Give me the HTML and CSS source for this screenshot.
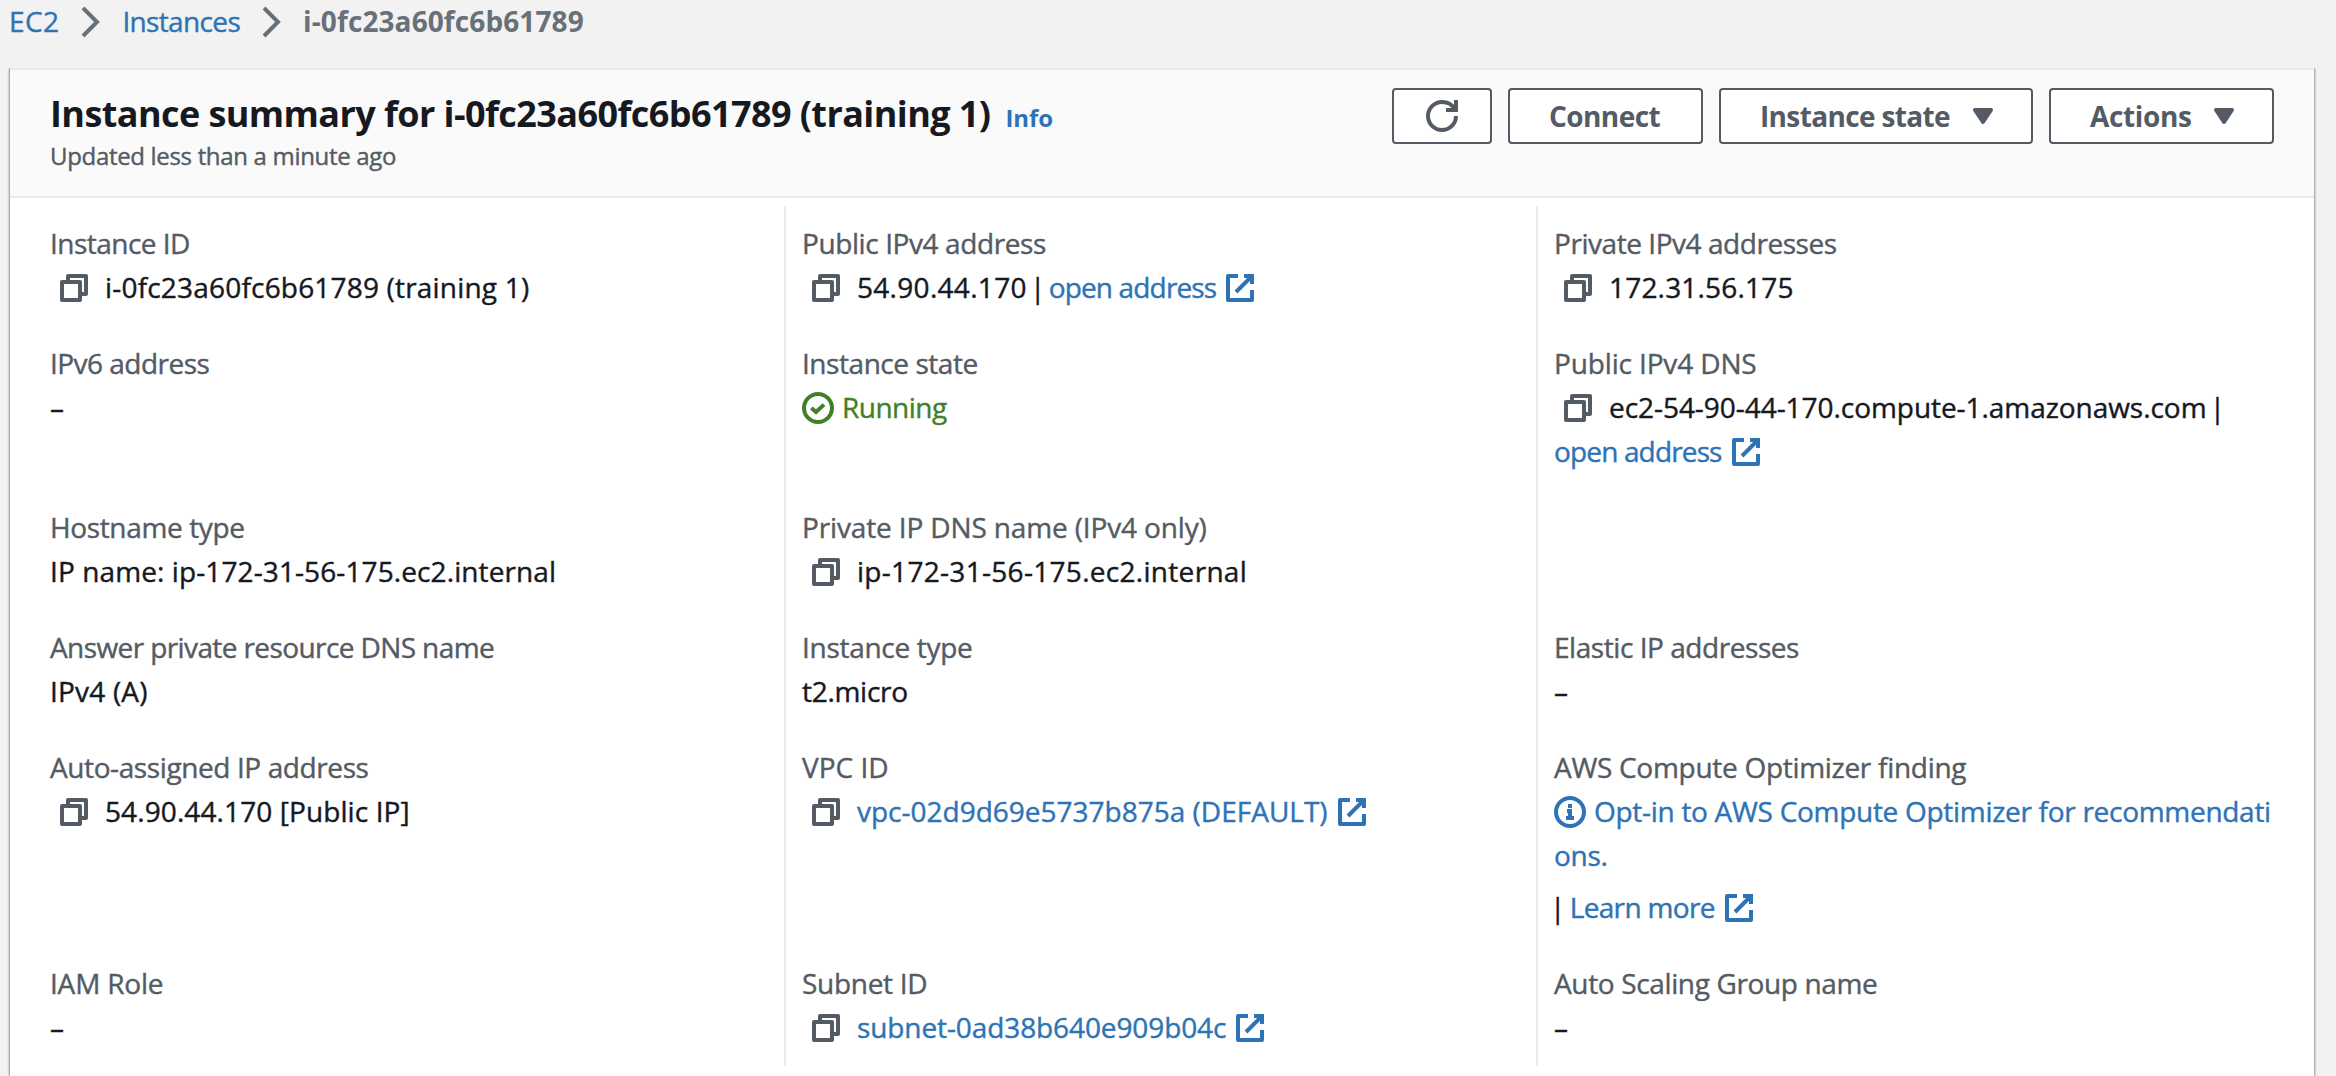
FILE: index.html
```
<!DOCTYPE html>
<html lang="en">
<head>
<meta charset="utf-8">
<title>Instance details | EC2</title>
<link rel="stylesheet" href="styles.css">
</head>
<body>
<svg class="sprite" aria-hidden="true">
  <symbol id="copy" viewBox="0 0 16 16"><path d="M2 5h9v9H2z"/><path d="M5 5V2h9v9h-3"/></symbol>
  <symbol id="external" viewBox="0 0 16 16"><path class="miter" d="M10 2h4v4M6 10l8-8"/><path d="M14 9v5H2V2h5"/></symbol>
  <symbol id="chevron" viewBox="0 0 16 16"><path class="miter" d="M4 1l7 7-7 7"/></symbol>
  <symbol id="refresh" viewBox="0 0 16 16"><path class="miter" d="M10 5h5V0"/><path class="miter" d="M15 8a7 7 0 1 1-7-7c3 0 5.300 1.500 6.400 3.700"/></symbol>
  <symbol id="caret" viewBox="0 0 16 16"><path class="solid" d="M4 5h8l-4 6z"/></symbol>
  <symbol id="success" viewBox="0 0 16 16"><circle cx="8" cy="8" r="7"/><path class="miter" d="M4.700 8l2.300 2 4-3.700"/></symbol>
  <symbol id="info" viewBox="0 0 16 16"><circle cx="8" cy="8" r="7"/><path class="miter" d="M6 11h4M8 11V7.500H6.500M8 6V4"/></symbol>
</svg>

<nav class="breadcrumbs" aria-label="Breadcrumbs">
  <a href="#" class="ls-w4">EC2</a>
  <svg class="icon"><use href="#chevron"/></svg>
  <a href="#" class="ls-t65">Instances</a>
  <svg class="icon"><use href="#chevron"/></svg>
  <span class="current">i-0fc23a60fc6b61789</span>
</nav>

<main class="card">
  <header class="card-header">
    <div class="heading">
      <h1><span class="title">Instance summary for i-0fc23a60fc6b61789 (training 1)</span><a href="#" class="info">Info</a></h1>
      <p class="updated">Updated less than a minute ago</p>
    </div>
    <div class="actions">
      <button class="btn btn-refresh" aria-label="Refresh"><svg class="icon"><use href="#refresh"/></svg></button>
      <button class="btn btn-connect"><span>Connect</span></button>
      <button class="btn btn-state"><span>Instance state</span><svg class="icon"><use href="#caret"/></svg></button>
      <button class="btn btn-actions"><span>Actions</span><svg class="icon"><use href="#caret"/></svg></button>
    </div>
  </header>

  <div class="details">
    <div class="field">
      <div class="label ls-t5">Instance ID</div>
      <div><svg class="icon copy"><use href="#copy"/></svg><span class="ls-w2">i-0fc23a60fc6b61789 (training 1)</span></div>
    </div>
    <div class="field">
      <div class="label ls-t4">Public IPv4 address</div>
      <div><svg class="icon copy"><use href="#copy"/></svg><span class="ls-w3">54.90.44.170</span> <span class="bar">|</span> <a href="#" class="ls-t8">open address<svg class="icon ext"><use href="#external"/></svg></a></div>
    </div>
    <div class="field">
      <div class="label ls-t45">Private IPv4 addresses</div>
      <div><svg class="icon copy"><use href="#copy"/></svg><span class="ls-w2">172.31.56.175</span></div>
    </div>

    <div class="field">
      <div class="label ls-t5">IPv6 address</div>
      <div class="dash">–</div>
    </div>
    <div class="field">
      <div class="label ls-t45">Instance state</div>
      <div class="running ls-t5"><svg class="icon status"><use href="#success"/></svg>Running</div>
    </div>
    <div class="field">
      <div class="label ls-t15">Public IPv4 DNS</div>
      <div><svg class="icon copy"><use href="#copy"/></svg><span class="ls-t05">ec2-54-90-44-170.compute-1.amazonaws.com</span> <span class="bar">|</span> <a href="#" class="ls-t8">open address<svg class="icon ext"><use href="#external"/></svg></a></div>
    </div>

    <div class="field">
      <div class="label ls-t35">Hostname type</div>
      <div class="ls-w1">IP name: ip-172-31-56-175.ec2.internal</div>
    </div>
    <div class="field">
      <div class="label ls-t15">Private IP DNS name (IPv4 only)</div>
      <div><svg class="icon copy"><use href="#copy"/></svg><span class="ls-w3">ip-172-31-56-175.ec2.internal</span></div>
    </div>
    <div class="field"></div>

    <div class="field">
      <div class="label ls-t6">Answer private resource DNS name</div>
      <div class="ls-w2">IPv4 (A)</div>
    </div>
    <div class="field">
      <div class="label ls-t3">Instance type</div>
      <div class="ls-t3">t2.micro</div>
    </div>
    <div class="field">
      <div class="label ls-t45">Elastic IP addresses</div>
      <div class="dash">–</div>
    </div>

    <div class="field">
      <div class="label ls-t4">Auto-assigned IP address</div>
      <div><svg class="icon copy"><use href="#copy"/></svg><span class="ls-w1">54.90.44.170 [Public IP]</span></div>
    </div>
    <div class="field">
      <div class="label">VPC ID</div>
      <div><svg class="icon copy"><use href="#copy"/></svg><a href="#">vpc-02d9d69e5737b875a (DEFAULT)<svg class="icon ext"><use href="#external"/></svg></a></div>
    </div>
    <div class="field">
      <div class="label ls-t3">AWS Compute Optimizer finding</div>
      <div class="finding"><a href="#" class="ls-t3"><svg class="icon status"><use href="#info"/></svg>Opt-in to AWS Compute Optimizer for recommendations.</a></div>
      <div class="more"><span class="bar">|</span> <a href="#" class="ls-t65">Learn more<svg class="icon ext"><use href="#external"/></svg></a></div>
    </div>

    <div class="field">
      <div class="label ls-t2">IAM Role</div>
      <div class="dash">–</div>
    </div>
    <div class="field">
      <div class="label ls-t3">Subnet ID</div>
      <div><svg class="icon copy"><use href="#copy"/></svg><a href="#" class="ls-t1">subnet-0ad38b640e909b04c<svg class="icon ext"><use href="#external"/></svg></a></div>
    </div>
    <div class="field">
      <div class="label ls-t35">Auto Scaling Group name</div>
      <div class="dash">–</div>
    </div>
  </div>
</main>
</body>
</html>
```
FILE: styles.css
```
* { box-sizing: border-box; }

html, body { height: 100%; }

body {
  margin: 0;
  display: flex;
  flex-direction: column;
  background: #f2f2f2;
  color: #16191f;
  font: 400 28px/44px "Open Sans", "Noto Sans", sans-serif;
  -webkit-text-stroke: .4px currentColor;
}

a { color: #2e73b5; text-decoration: none; }
h1, p { margin: 0; }
h1, .current, .btn { -webkit-text-stroke: 0; }

/* Icons */
.sprite { display: none; }
.icon {
  flex: none;
  width: 32px;
  height: 32px;
  vertical-align: -6px;
  fill: none;
  stroke: currentColor;
  stroke-width: 2;
  stroke-linejoin: round;
  overflow: visible;
}
.miter { stroke-linejoin: miter; }
.solid { fill: currentColor; }
.copy { margin: 0 15px 0 8px; color: #545b64; }
.ext { margin-left: 8px; }
.status { margin-right: 8px; }

/* Breadcrumbs */
.breadcrumbs {
  flex: none;
  display: flex;
  align-items: flex-start;
  height: 68px;
  padding-left: 9px;
  line-height: 42px;
}
.breadcrumbs .icon { margin: 6px 15px 0 16px; color: #687078; }
.current { color: #687078; font-weight: 700; letter-spacing: .1px; }

/* Card */
.card {
  flex: 1;
  width: 2304px;
  margin-left: 10px;
  background: #fff;
  border-top: 2px solid #e9ebeb;
  box-shadow: 1px 0 2px rgba(0, 28, 36, .4), -1px 0 2px rgba(0, 28, 36, .4);
  clip-path: inset(0 -4px);
}
.card-header {
  display: flex;
  justify-content: space-between;
  align-items: flex-start;
  height: 128px;
  padding: 18px 40px 0;
  background: #fafafa;
  border-bottom: 2px solid #e9ebeb;
}
.heading { padding-top: 4px; }
h1 { display: flex; align-items: baseline; font-size: 36px; line-height: 44px; }
.title { letter-spacing: -.58px; }
.info { margin-left: 15px; font-size: 24px; letter-spacing: -.1px; }
.updated {
  color: #545b64;
  font-size: 24px;
  line-height: 32px;
  letter-spacing: -.32px;
}

/* Buttons */
.actions { display: flex; gap: 16px; }
.btn {
  display: flex;
  align-items: center;
  height: 56px;
  padding: 0;
  background: #fff;
  border: 2px solid #545b64;
  border-radius: 4px;
  color: #545b64;
  font: 700 28px/50px "Open Sans", "Noto Sans", sans-serif;
}
.btn span { padding-bottom: 1px; }
.btn-refresh { width: 100px; justify-content: center; }
.btn-connect { width: 195px; padding-left: 39px; letter-spacing: -.57px; }
.btn-state { width: 314px; padding-left: 39px; letter-spacing: -.65px; }
.btn-actions { width: 225px; padding-left: 39px; letter-spacing: -.36px; }
.btn span + .icon { margin-left: auto; margin-right: 32px; }

/* Detail fields */
.details {
  display: grid;
  grid-template-columns: 774px 752px 1fr;
  grid-template-rows: 135px 164px 120px 120px 216px 105px;
  padding: 8px 0;
}
.field { padding-left: 40px; }
.field:nth-child(-n+3) { padding-top: 15px; }
.field:not(:nth-child(3n+1)) { padding-left: 16px; border-left: 2px solid #e9ebeb; }
.field:nth-child(3n) { padding-right: 40px; }
.field a { white-space: nowrap; }
.label { color: #545b64; }
.bar { margin: 0 -4px; }
.running { color: #437f28; }
.finding { word-break: break-all; }
.field .finding a { white-space: normal; }
.more { margin-top: 8px; }
.more .bar { margin-right: -3px; }

/* Tracking */
.ls-t8 { letter-spacing: -.85px; }
.ls-t65 { letter-spacing: -.65px; }
.ls-t6 { letter-spacing: -.6px; }
.ls-t5 { letter-spacing: -.52px; }
.ls-t45 { letter-spacing: -.45px; }
.ls-t4 { letter-spacing: -.4px; }
.ls-t35 { letter-spacing: -.36px; }
.ls-t3 { letter-spacing: -.29px; }
.ls-t2 { letter-spacing: -.2px; }
.ls-t15 { letter-spacing: -.14px; }
.ls-t1 { letter-spacing: -.1px; }
.ls-t05 { letter-spacing: -.05px; }
.ls-w1 { letter-spacing: .1px; }
.ls-w2 { letter-spacing: .19px; }
.ls-w3 { letter-spacing: .3px; }
.ls-w4 { letter-spacing: .4px; }
```
